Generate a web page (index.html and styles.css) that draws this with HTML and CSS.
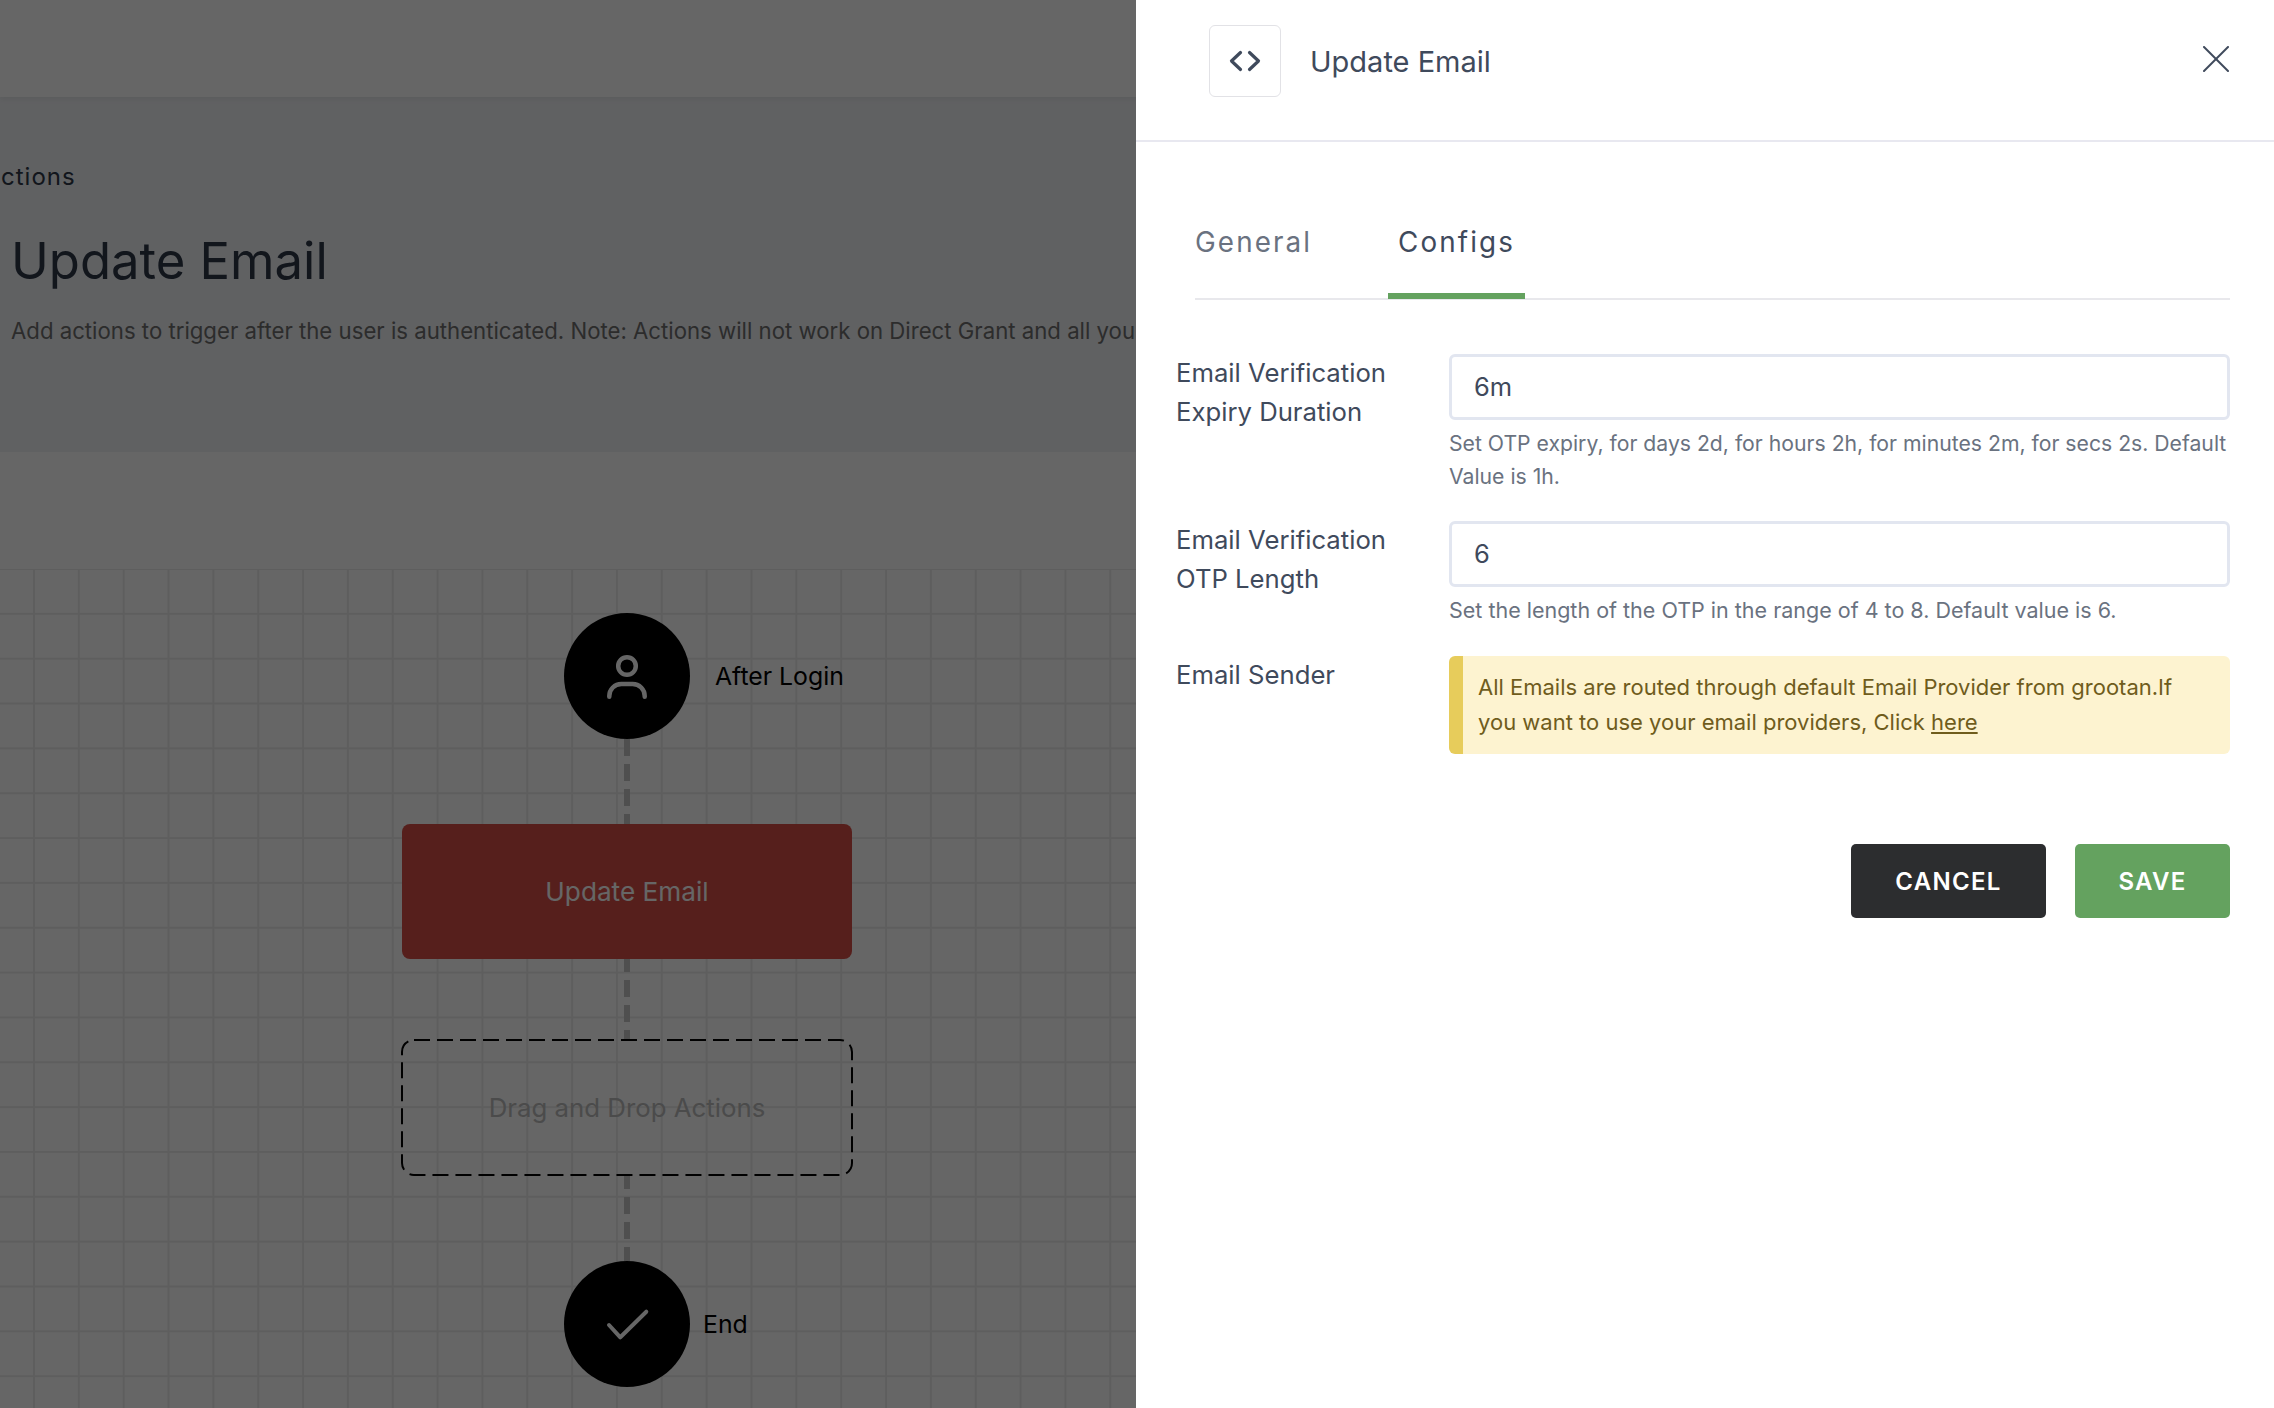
FILE: index.html
```html
<!DOCTYPE html>
<html lang="en">
<head>
<meta charset="utf-8">
<title>Update Email</title>
<link rel="stylesheet" href="styles.css">
</head>
<body>
<div class="page">
  <header class="topbar"></header>
  <section class="intro">
    <div class="crumb">ctions</div>
    <h1 class="heading">Update Email</h1>
    <p class="lede">Add actions to trigger after the user is authenticated. Note: Actions will not work on Direct Grant and all you</p>
  </section>
  <div class="spacer"></div>
  <main class="canvas">
    <div class="flow">
      <div class="round">
        <svg class="round-icon" viewBox="0 0 60 60" width="60" height="60" fill="none" stroke="#fff" stroke-width="4.5" stroke-linecap="round" stroke-linejoin="round"><circle cx="30" cy="20" r="8.8"/><path d="M12.3 50.8V50a12 12 0 0 1 12-12H35.7a12 12 0 0 1 12 12V50.8"/></svg>
        <span class="round-label label-login">After Login</span>
      </div>
      <div class="link"></div>
      <div class="action">Update Email</div>
      <div class="link link-mid"></div>
      <div class="dropzone">
        <svg class="dash-frame" viewBox="0 0 452 137" width="452" height="137" fill="none" stroke="#000" stroke-width="2" stroke-dasharray="16 7"><rect x="1" y="1" width="450" height="135" rx="12"/></svg>
        <span>Drag and Drop Actions</span>
      </div>
      <div class="link link-end"></div>
      <div class="round">
        <svg class="round-icon" viewBox="0 0 60 60" width="60" height="60" fill="none" stroke="#fff" stroke-width="4" stroke-linecap="round" stroke-linejoin="round"><path d="M12 31L23.3 43.3L49.3 17.7"/></svg>
        <span class="round-label label-end">End</span>
      </div>
    </div>
  </main>
</div>
<div class="backdrop"></div>
<aside class="drawer">
  <div class="drawer-head">
    <span class="code-box">
      <svg viewBox="0 0 32 24" width="32" height="24" fill="none" stroke="#3f4a5c" stroke-width="3.2" stroke-linecap="round" stroke-linejoin="round"><path d="M11.5 3.5L2.5 12L11.5 20.5"/><path d="M20.5 3.5L29.5 12L20.5 20.5"/></svg>
    </span>
    <span class="drawer-title">Update Email</span>
    <svg class="close" viewBox="0 0 26 26" width="26" height="26" fill="none" stroke="#3f4a5c" stroke-width="2" stroke-linecap="round"><path d="M1 1L25 25"/><path d="M25 1L1 25"/></svg>
  </div>
  <nav class="tabs">
    <span class="tab">General</span>
    <span class="tab tab-active">Configs</span>
  </nav>
  <form class="form">
    <div class="row">
      <label class="field-label">Email Verification Expiry Duration</label>
      <div>
        <div class="input">6m</div>
        <p class="help">Set OTP expiry, for days 2d, for hours 2h, for minutes 2m, for secs 2s. Default Value is 1h.</p>
      </div>
    </div>
    <div class="row row-two">
      <label class="field-label">Email Verification OTP Length</label>
      <div>
        <div class="input">6</div>
        <p class="help help-single">Set the length of the OTP in the range of 4 to 8. Default value is 6.</p>
      </div>
    </div>
    <div class="row row-three">
      <label class="field-label">Email Sender</label>
      <div class="alert">All Emails are routed through default Email Provider from grootan.If you want to use your email providers, Click <a class="alert-link" href="#">here</a></div>
    </div>
    <div class="actions">
      <button class="btn btn-dark" type="button">CANCEL</button>
      <button class="btn btn-green" type="button">SAVE</button>
    </div>
  </form>
</aside>
</body>
</html>
```
FILE: styles.css
```css
* { box-sizing: border-box; }
html, body { margin: 0; height: 100%; }
body {
  width: 2274px;
  height: 1408px;
  overflow: hidden;
  position: relative;
  background: #fff;
  font-family: Inter, "Liberation Sans", sans-serif;
  color: #2d3748;
}
.page { display: flex; flex-direction: column; height: 1408px; }
.topbar { height: 97px; background: #fff; box-shadow: 0 2px 6px rgba(0,0,0,.06); position: relative; }
.intro { height: 355px; background: #f0f2f5; padding-top: 65px; overflow: hidden; white-space: nowrap; }
.crumb { font-size: 24px; line-height: 30px; letter-spacing: 1px; padding-left: 1px; color: #2d3748; }
.heading { margin: 37px 0 0 11px; font-size: 50.8px; line-height: 64px; font-weight: 400; color: #2d3748; }
.lede { margin: 23px 0 0 11px; font-size: 22.2px; line-height: 30px; color: #6f6f6f; }
.spacer { height: 117px; }
.canvas {
  flex: 1;
  padding: 44px 0 0 401px;
  background-color: #fff;
  background-image: linear-gradient(#ececec 2px, transparent 2px), linear-gradient(90deg, #ececec 2px, transparent 2px);
  background-size: 44.85px 44.85px;
  background-position: 33px -1px;
}
.flow { width: 452px; display: flex; flex-direction: column; align-items: center; }
.round { width: 126px; height: 126px; border-radius: 50%; background: #000; position: relative; display: flex; align-items: center; justify-content: center; flex: none; }
.round-label { position: absolute; top: 50%; transform: translateY(-50%); font-size: 24.8px; line-height: 32px; color: #000; white-space: nowrap; }
.label-login { left: 151px; }
.label-end { left: 139px; }
.link {
  width: 6px;
  height: 85px;
  flex: none;
  background-image: linear-gradient(to bottom, #c6c6c6 17.5px, transparent 17.5px);
  background-size: 6px 25px;
}
.link-mid { height: 80px; background-position: 0 -4px; }
.link-end { background-position: 0 -4px; }
.action {
  width: 450px; height: 135px; flex: none;
  background: #d74f46; border-radius: 8px; color: #fff;
  display: flex; align-items: center; justify-content: center;
  font-size: 26.2px;
}
.dropzone {
  width: 452px; height: 137px; flex: none;
  position: relative; color: #bbb;
  display: flex; align-items: center; justify-content: center;
  font-size: 25.8px;
}
.dash-frame { position: absolute; inset: 0; }
.backdrop { position: absolute; inset: 0; background: rgba(0,0,0,.6); }
.drawer { position: absolute; top: 0; right: 0; bottom: 0; width: 1138px; background: #fff; }
.drawer-head { height: 142px; border-bottom: 2px solid #e8e8f0; padding: 25px 45px 0 73px; display: flex; align-items: flex-start; position: relative; }
.code-box { width: 72px; height: 72px; border: 1.5px solid #e2e2e6; border-radius: 6px; display: flex; align-items: center; justify-content: center; }
.drawer-title { margin-left: 29px; font-size: 29px; line-height: 73px; color: #3f4a5c; }
.close { position: absolute; right: 45px; top: 46px; }
.tabs { margin: 0 44px 0 59px; height: 158px; border-bottom: 2px solid #e8e8ec; display: flex; align-items: flex-end; gap: 76px; }
.tab { height: 80px; margin-bottom: -2px; font-size: 27.8px; line-height: 44px; letter-spacing: 2.1px; color: #6a7280; display: block; }
.tab-active { height: 79px; padding: 0 10px; color: #3f4a5c; border-bottom: 6px solid #64a25f; margin-bottom: -1px; }
.form { padding: 54px 44px 0 40px; }
.row { display: grid; grid-template-columns: 273px 1fr; }
.row-two { margin-top: 28px; }
.row-three { margin-top: 29px; }
.field-label { width: 225px; align-self: start; margin-top: -1px; font-size: 25.7px; line-height: 39px; color: #3f4a5c; }
.input { height: 66px; border: 3px solid #e2e6f0; border-radius: 6px; padding-left: 22px; font-size: 25.5px; line-height: 60px; color: #3f4a5c; }
.help { margin: 7px 0 0; font-size: 21.2px; line-height: 33px; color: #6a7280; }
.help-single { font-size: 21.5px; }
.alert { height: 98px; border-left: 14px solid #e7cc5b; border-radius: 6px; background: #fdf3d0; padding: 14px 20px 0 15px; font-size: 22px; line-height: 35px; color: #6f5c1c; }
.alert-link { color: inherit; text-decoration: underline; }
.actions { margin-top: 90px; display: flex; justify-content: flex-end; gap: 29px; }
.btn { height: 74px; border: 0; border-radius: 5px; color: #fff; font-family: inherit; font-size: 24px; font-weight: 600; letter-spacing: 1.3px; }
.btn-dark { width: 195px; background: #2c2d2f; }
.btn-green { width: 155px; background: #64a25f; }
```
